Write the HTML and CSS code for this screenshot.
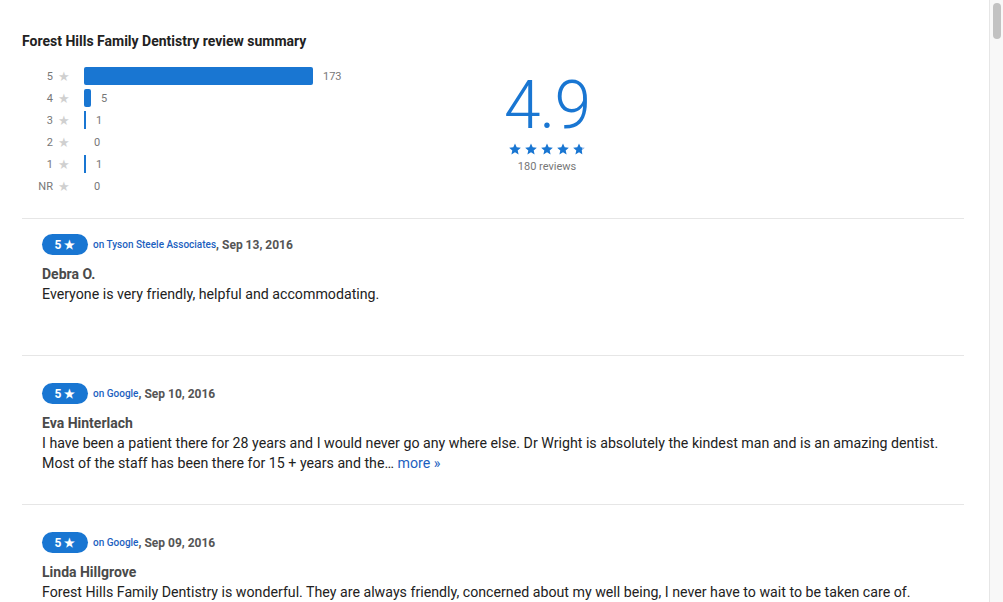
FILE: index.html
```html
<!DOCTYPE html>
<html>
<head>
<meta charset="utf-8">
<link rel="stylesheet" href="styles.css">
</head>
<body>
<main class="page">
  <h1 class="title">Forest Hills Family Dentistry review summary</h1>
  <div class="summary">
    <div class="histogram">
      <div class="hrow"><span class="hlabel">5</span><span class="hstar">★</span><span class="bar" style="width:229px"></span><span class="hcount">173</span></div>
      <div class="hrow"><span class="hlabel">4</span><span class="hstar">★</span><span class="bar" style="width:7px"></span><span class="hcount">5</span></div>
      <div class="hrow"><span class="hlabel">3</span><span class="hstar">★</span><span class="bar thin" style="width:2px"></span><span class="hcount">1</span></div>
      <div class="hrow"><span class="hlabel">2</span><span class="hstar">★</span><span class="bar" style="width:0px"></span><span class="hcount">0</span></div>
      <div class="hrow"><span class="hlabel">1</span><span class="hstar">★</span><span class="bar thin" style="width:2px"></span><span class="hcount">1</span></div>
      <div class="hrow"><span class="hlabel">NR</span><span class="hstar">★</span><span class="bar" style="width:0px"></span><span class="hcount">0</span></div>
    </div>
    <div class="score">
      <div class="score-num">4.9</div>
      <div class="score-stars">
        <svg viewBox="0 0 24 24" class="s"><path d="M12 2.5l2.9 6.6 7.1.6-5.4 4.7 1.6 7-6.2-3.8-6.2 3.8 1.6-7L2 9.7l7.1-.6z"/></svg>
        <svg viewBox="0 0 24 24" class="s"><path d="M12 2.5l2.9 6.6 7.1.6-5.4 4.7 1.6 7-6.2-3.8-6.2 3.8 1.6-7L2 9.7l7.1-.6z"/></svg>
        <svg viewBox="0 0 24 24" class="s"><path d="M12 2.5l2.9 6.6 7.1.6-5.4 4.7 1.6 7-6.2-3.8-6.2 3.8 1.6-7L2 9.7l7.1-.6z"/></svg>
        <svg viewBox="0 0 24 24" class="s"><path d="M12 2.5l2.9 6.6 7.1.6-5.4 4.7 1.6 7-6.2-3.8-6.2 3.8 1.6-7L2 9.7l7.1-.6z"/></svg>
        <svg viewBox="0 0 24 24" class="s"><defs><linearGradient id="pg"><stop offset="0.8" stop-color="#1976d2"/><stop offset="0.8" stop-color="#8fb6e6"/></linearGradient></defs><path fill="url(#pg)" d="M12 2.5l2.9 6.6 7.1.6-5.4 4.7 1.6 7-6.2-3.8-6.2 3.8 1.6-7L2 9.7l7.1-.6z"/></svg>
      </div>
      <div class="score-count">180 reviews</div>
    </div>
  </div>

  <div class="review first">
    <div class="meta"><span class="badge">5 ★</span><span class="src">on Tyson Steele Associates</span><span class="date">, Sep 13, 2016</span></div>
    <div class="name">Debra O.</div>
    <p class="text">Everyone is very friendly, helpful and accommodating.</p>
  </div>

  <div class="review">
    <div class="meta"><span class="badge">5 ★</span><span class="src">on Google</span><span class="date">, Sep 10, 2016</span></div>
    <div class="name">Eva Hinterlach</div>
    <p class="text">I have been a patient there for 28 years and I would never go any where else. Dr Wright is absolutely the kindest man and is an amazing dentist. Most of the staff has been there for 15 + years and the… <a class="more" href="#">more »</a></p>
  </div>

  <div class="review">
    <div class="meta"><span class="badge">5 ★</span><span class="src">on Google</span><span class="date">, Sep 09, 2016</span></div>
    <div class="name">Linda Hillgrove</div>
    <p class="text">Forest Hills Family Dentistry is wonderful. They are always friendly, concerned about my well being, I never have to wait to be taken care of.</p>
  </div>
</main>
<div class="scrollbar"><div class="thumb"></div></div>
</body>
</html>
```

FILE: styles.css
```css
html, body {
  margin: 0;
  padding: 0;
  background: #fff;
}
body {
  font-family: Roboto, "Liberation Sans", Arial, sans-serif;
  color: #222;
  display: flex;
  height: 602px;
  overflow: hidden;
}
.page {
  flex: 1;
  min-width: 0;
  padding: 32px 25px 0 22px;
}
.scrollbar {
  width: 14px;
  flex: none;
  background: #f8f8f8;
  border-left: 1px solid #e6e6e6;
  padding: 3px 3px 0 3px;
  box-sizing: border-box;
  display: flex;
  flex-direction: column;
  align-items: center;
}
.thumb {
  width: 8px;
  height: 36px;
  border-radius: 4px;
  background: #c2c2c2;
}
.title {
  margin: 0 0 14px 0;
  font-size: 14px;
  font-weight: 700;
  line-height: 18px;
  color: #222;
}
.summary {
  display: flex;
  align-items: flex-start;
  padding-bottom: 21px;
  border-bottom: 1px solid #e6e6e6;
}
.histogram {
  width: 328px;
  display: flex;
  flex-direction: column;
  padding-top: 1px;
}
.hrow {
  height: 22px;
  display: flex;
  align-items: center;
  font-size: 11px;
  color: #777;
}
.hlabel {
  width: 31px;
  text-align: right;
}
.hstar {
  width: 12px;
  margin-left: 5px;
  color: #d0d0d0;
  font-size: 13px;
  text-align: center;
}
.bar {
  margin-left: 14px;
  height: 18px;
  background: #1976d2;
  border-radius: 2px;
}
.bar.thin {
  border-radius: 0;
}
.hcount {
  margin-left: 10px;
}
.score {
  width: 394px;
  display: flex;
  flex-direction: column;
  align-items: center;
  padding-top: 9px;
}
.score-num {
  font-size: 66px;
  font-weight: 300;
  line-height: 66px;
  color: #1976d2;
  letter-spacing: -1px;
}
.score-stars {
  display: flex;
  gap: 2px;
  margin-top: 3px;
}
.s {
  width: 14px;
  height: 14px;
  fill: #1976d2;
}
.score-count {
  font-size: 11px;
  color: #777;
  margin-top: 4px;
}
.review {
  padding: 27px 20px 0 20px;
  min-height: 121px;
  border-bottom: 1px solid #e6e6e6;
}
.review.first {
  padding-top: 15px;
}
.meta {
  display: flex;
  align-items: center;
  height: 21px;
}
.badge {
  display: inline-flex;
  align-items: center;
  justify-content: center;
  width: 46px;
  height: 21px;
  border-radius: 11px;
  background: #1976d2;
  color: #fff;
  font-size: 12px;
  font-weight: 700;
}
.src {
  margin-left: 5px;
  font-size: 10px;
  font-weight: 500;
  color: #1c5fc0;
}
.date {
  font-size: 12px;
  font-weight: 700;
  color: #555;
}
.name {
  margin-top: 10px;
  font-size: 14px;
  font-weight: 700;
  line-height: 18px;
  color: #4a4a4a;
}
.text {
  margin: 1px 0 0 0;
  font-size: 14.2px;
  line-height: 20px;
  color: #222;
}
.more {
  color: #1c5fc0;
  text-decoration: none;
}
```
